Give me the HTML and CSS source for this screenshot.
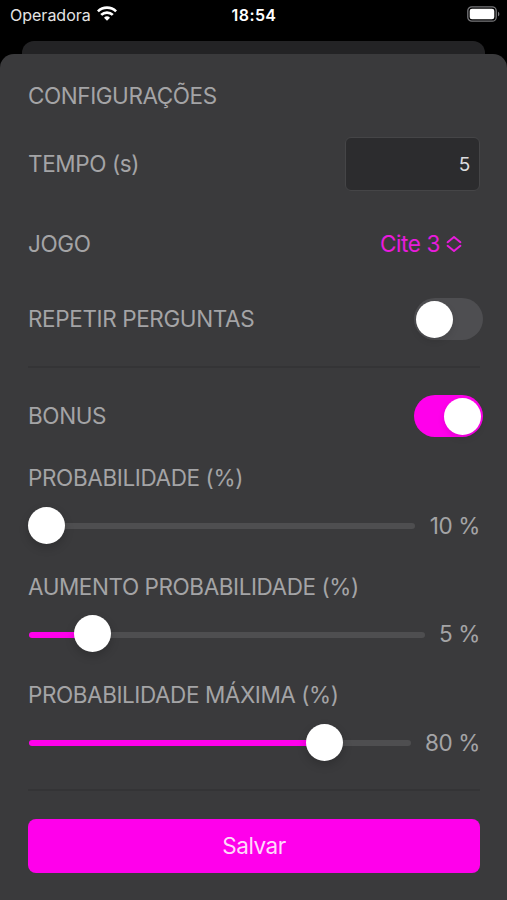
FILE: index.html
```html
<!DOCTYPE html>
<html lang="pt">
<head>
<meta charset="utf-8">
<title>Configurações</title>
<link rel="stylesheet" href="styles.css">
</head>
<body>
<div class="screen">
  <header class="status">
    <div class="carrier"><span>Operadora</span>
      <svg class="wifi" viewBox="0 0 20 15" width="20" height="15"><g fill="none" stroke="#fff" stroke-width="2.7"><path d="M.9 5.4a13.1 13.1 0 0 1 18.2 0"/><path d="M4.2 8.9a8.3 8.3 0 0 1 11.6 0"/></g><path fill="#fff" d="M7 11.7a4.4 4.4 0 0 1 6 0L10 14.8z"/></svg>
    </div>
    <time class="clock">18:54</time>
    <svg class="battery" viewBox="0 0 33 16" width="33" height="16"><rect x=".8" y=".8" width="28.4" height="14.4" rx="4" fill="none" stroke="#77777a" stroke-width="1.3"/><rect x="2.7" y="2.7" width="24.6" height="10.6" rx="2.3" fill="#fff"/><path d="M31 5.7c1.8.7 1.8 3.9 0 4.6z" fill="#77777a"/></svg>
  </header>
  <div class="backdrop"></div>
  <main class="sheet">
    <h1 class="title">CONFIGURAÇÕES</h1>
    <div class="row tempo"><span>TEMPO (s)</span><div class="field">5</div></div>
    <div class="row jogo"><span>JOGO</span>
      <div class="picker"><span>Cite 3</span><svg viewBox="0 0 16 18" width="16" height="18"><path d="M1.6 7.2 8 2l6.4 5.2M1.6 10.8 8 16l6.4-5.2" fill="none" stroke="#e81bdc" stroke-width="2" stroke-linecap="round" stroke-linejoin="round"/></svg></div>
    </div>
    <div class="row"><span>REPETIR PERGUNTAS</span><div class="toggle"><i class="knob"></i></div></div>
    <hr class="rule">
    <div class="row"><span>BONUS</span><div class="toggle on"><i class="knob"></i></div></div>
    <section class="groups">
      <div class="group">
        <div class="label">PROBABILIDADE (%)</div>
        <div class="line"><div class="slider s10"><i class="fill"></i><i class="knob"></i><i class="rest"></i></div><span class="value">10 %</span></div>
      </div>
      <div class="group">
        <div class="label wide">AUMENTO PROBABILIDADE (%)</div>
        <div class="line"><div class="slider s5"><i class="fill"></i><i class="knob"></i><i class="rest"></i></div><span class="value">5 %</span></div>
      </div>
      <div class="group">
        <div class="label wide">PROBABILIDADE MÁXIMA (%)</div>
        <div class="line"><div class="slider s80"><i class="fill"></i><i class="knob"></i><i class="rest"></i></div><span class="value">80 %</span></div>
      </div>
    </section>
    <hr class="rule last">
    <button class="save">Salvar</button>
  </main>
</div>
</body>
</html>
```
FILE: styles.css
```css
* { box-sizing: border-box; }
body { margin: 0; background: #000; font-family: Inter, "Liberation Sans", sans-serif; }
.screen { width: 507px; height: 900px; overflow: hidden; display: flex; flex-direction: column; }
.status { height: 41px; flex: none; display: grid; grid-template-columns: 1fr auto 1fr; align-items: start; padding: 5px 7px 0 10px; color: #fff; font-size: 16px; line-height: 20px; }
.carrier { display: flex; gap: 6px; color: #e4e4e4; }
.wifi { margin-top: 1px; }
.clock { font-weight: 600; margin-left: -2px; letter-spacing: .4px; }
.battery { justify-self: end; margin-top: 1px; }
.backdrop { height: 13px; flex: none; margin: 0 22px; background: #232325; border-radius: 12px 12px 0 0; }
.sheet { flex: 1; background: #3a3a3c; border-radius: 14px 14px 0 0; padding: 0 27px 0 28px; color: #a4a4a6; font-size: 22.5px; line-height: 28px; letter-spacing: -.38px; white-space: nowrap; }
.title { margin: 0; height: 83px; display: flex; align-items: center; font-size: inherit; font-weight: 400; letter-spacing: -.43px; }
.row { height: 44px; display: flex; align-items: center; justify-content: space-between; }
.tempo { height: 54px; }
.jogo { height: 106px; }
.field { width: 135px; height: 54px; border: 1px solid #454547; border-radius: 6px; background: #2c2c2e; color: #dcdcde; font-size: 19px; line-height: 53px; text-align: right; padding-right: 9px; }
.picker { display: flex; align-items: center; gap: 6px; margin-right: 18px; color: #e81bdc; }
.toggle { width: 69px; height: 42px; border-radius: 21px; background: #4e4e51; margin-right: -3px; padding: 2px; display: flex; align-items: center; }
.toggle.on { background: #ff00eb; justify-content: flex-end; }
.knob { width: 37px; height: 37px; flex: none; border-radius: 50%; background: #fff; box-shadow: 0 3px 7px rgba(0,0,0,.1); }
.rule { border: 0; height: 2px; margin: 25px 0 26px; background: #343436; }
.groups { margin-top: 26px; display: flex; flex-direction: column; gap: 28.5px; }
.group { height: 80px; }
.label { height: 28px; }
.label.wide { letter-spacing: -.43px; }
.line { height: 37px; margin-top: 14.5px; display: flex; align-items: center; justify-content: space-between; }
.value { padding-top: 1px; }
.slider { display: flex; align-items: center; }
.slider .knob { box-shadow: 0 4px 10px rgba(0,0,0,.18); z-index: 1; }
.fill, .rest { height: 6px; margin-top: 2px; }
.fill { background: #ff00eb; border-radius: 3px 0 0 3px; margin-left: 1px; margin-right: -1px; }
.rest { flex: 1; background: #4e4e50; border-radius: 0 3px 3px 0; margin-left: -1px; }
.s10 { width: 387px; }
.s10 .fill { width: 0; margin: 0; }
.s5 { width: 397px; }
.s5 .fill { width: 45.5px; }
.s80 { width: 383px; }
.s80 .fill { width: 277.5px; }
.rule.last { margin: 28px 0; }
.save { display: block; width: 452px; height: 54px; border: 0; border-radius: 8px; padding: 0; background: #ff00eb; color: #ffd9fb; font: inherit; letter-spacing: -.5px; }
```
